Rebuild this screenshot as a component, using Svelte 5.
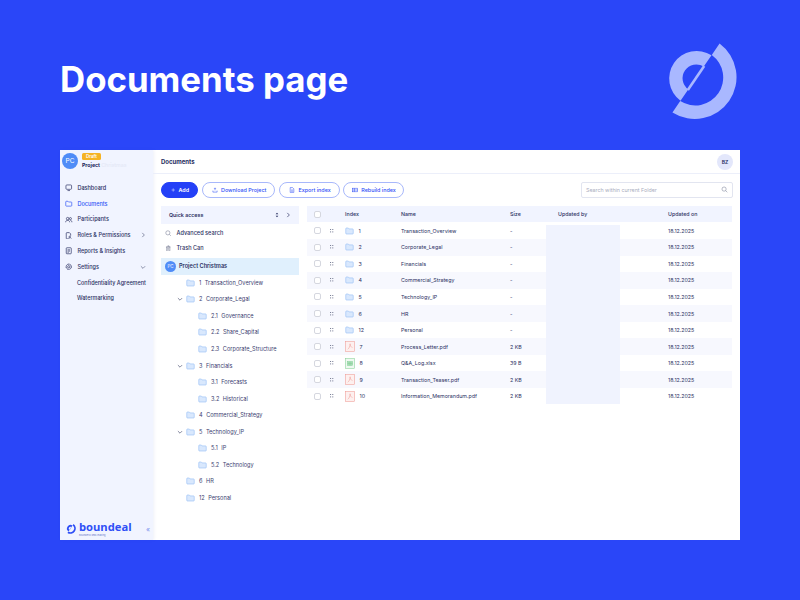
<script>
	const nav = [
		{ label: "Dashboard", icon: "monitor" },
		{ label: "Documents", icon: "folder", active: true },
		{ label: "Participants", icon: "people" },
		{ label: "Roles & Permissions", icon: "doc", chevron: "right" },
		{ label: "Reports & Insights", icon: "report" },
		{ label: "Settings", icon: "gear", chevron: "down" },
		{ label: "Confidentiality Agreement" },
		{ label: "Watermarking" },
	]

	const tree = [
		{ depth: 0, num: "1", name: "Transaction_Overview" },
		{ depth: 0, num: "2", name: "Corporate_Legal", open: true },
		{ depth: 1, num: "2.1", name: "Governance" },
		{ depth: 1, num: "2.2", name: "Share_Capital" },
		{ depth: 1, num: "2.3", name: "Corporate_Structure" },
		{ depth: 0, num: "3", name: "Financials", open: true },
		{ depth: 1, num: "3.1", name: "Forecasts" },
		{ depth: 1, num: "3.2", name: "Historical" },
		{ depth: 0, num: "4", name: "Commercial_Strategy" },
		{ depth: 0, num: "5", name: "Technology_IP", open: true },
		{ depth: 1, num: "5.1", name: "IP" },
		{ depth: 1, num: "5.2", name: "Technology" },
		{ depth: 0, num: "6", name: "HR" },
		{ depth: 0, num: "12", name: "Personal" },
	]

	const rows = [
		{ type: "folder", index: "1", name: "Transaction_Overview", size: "-" },
		{ type: "folder", index: "2", name: "Corporate_Legal", size: "-" },
		{ type: "folder", index: "3", name: "Financials", size: "-" },
		{ type: "folder", index: "4", name: "Commercial_Strategy", size: "-" },
		{ type: "folder", index: "5", name: "Technology_IP", size: "-" },
		{ type: "folder", index: "6", name: "HR", size: "-" },
		{ type: "folder", index: "12", name: "Personal", size: "-" },
		{ type: "pdf", index: "7", name: "Process_Letter.pdf", size: "2 KB" },
		{ type: "xls", index: "8", name: "Q&A_Log.xlsx", size: "39 B" },
		{ type: "pdf", index: "9", name: "Transaction_Teaser.pdf", size: "2 KB" },
		{ type: "pdf", index: "10", name: "Information_Memorandum.pdf", size: "2 KB" },
	]

	// logo: half ring on the upper left, larger half ring on the lower right, cut along one diagonal
	const dx = 0.5635
	const dy = -0.8254
	const pt = (r) => `${(r * dx).toFixed(2)} ${(r * dy).toFixed(2)}`
	const halfRing = (outer, inner, sweep) =>
		`M${pt(outer)}A${outer} ${outer} 0 0 ${sweep} ${pt(-outer)}L${pt(-inner)}A${inner} ${inner} 0 0 ${1 - sweep} ${pt(inner)}Z`
	const logoRing = halfRing(27.5, 13.8, 0)
	const logoArc = halfRing(41.8, 28, 1)
	const logoBar = `M${pt(14.5)}L${pt(-14.5)}`
</script>

{#snippet folder(cls)}
	<svg class={cls} viewBox="0 0 12 10" fill="#d9e8fd" stroke="#93bdf7" stroke-width="0.8">
		<path d="M1 2a1 1 0 0 1 1-1h2.4l1 1.2H10a1 1 0 0 1 1 1V8a1 1 0 0 1-1 1H2a1 1 0 0 1-1-1z" />
	</svg>
{/snippet}

{#snippet logo(cls, fill)}
	<svg class={cls} viewBox="-42 -42 84 84" {fill}>
		<path d={logoRing} />
		<path d={logoArc} />
		<path d={logoBar} stroke={fill} stroke-width="2.6" />
	</svg>
{/snippet}

{#snippet navIcon(name)}
	<svg class="nav-icon" viewBox="0 0 12 12" fill="none" stroke={name === "folder" ? "#2f55f5" : "#2b3163"} stroke-width="1.1">
		{#if name === "monitor"}
			<rect x="1.5" y="1.5" width="9" height="7" rx="1.4" /><path d="M4 10.5h4" />
		{:else if name === "folder"}
			<path d="M1.2 3a1 1 0 0 1 1-1h2.4l1 1.2h4.2a1 1 0 0 1 1 1v4.6a1 1 0 0 1-1 1H2.2a1 1 0 0 1-1-1z" />
		{:else if name === "people"}
			<circle cx="4.2" cy="4.2" r="2" /><circle cx="8.6" cy="4.2" r="1.7" /><path d="M1 10c0-2 1.4-3 3.2-3s3.2 1 3.2 3M8.6 7c1.4 0 2.4 1 2.4 3" />
		{:else if name === "doc"}
			<path d="M7 11H3a1 1 0 0 1-1-1V2a1 1 0 0 1 1-1h4l2 2v3" /><circle cx="7.5" cy="8" r="1.3" /><path d="M8.5 9l1.5 1.5" />
		{:else if name === "report"}
			<rect x="2" y="1.2" width="8" height="9.6" rx="1" /><path d="M4 4.5h4M4 6.5h4M4 8.5h2" />
		{:else if name === "gear"}
			<circle cx="6" cy="6" r="1.8" /><circle cx="6" cy="6" r="4.2" stroke-dasharray="2 0.6" stroke-width="1.5" />
		{/if}
	</svg>
{/snippet}

<div class="page">
	<header class="hero">
		<h1>Documents page</h1>
		{@render logo("hero-logo", "#a9b8ff")}
	</header>

	<section class="app">
		<aside class="sidebar">
			<div class="project">
				<span class="avatar big">PC</span>
				<div class="project-text">
					<span class="draft">Draft</span>
					<span class="project-name">Project <span class="faded">Christmas</span></span>
				</div>
			</div>
			<nav>
				{#each nav as item}
					<div class="nav-item" class:active={item.active} class:sub={!item.icon}>
						{#if item.icon}{@render navIcon(item.icon)}{/if}
						<span>{item.label}</span>
						{#if item.chevron === "right"}
							<svg class="chev" viewBox="0 0 8 8" fill="none" stroke="#5a6080" stroke-width="0.9"><path d="M3 1.2L5.8 4L3 6.8" /></svg>
						{:else if item.chevron === "down"}
							<svg class="chev" viewBox="0 0 8 8" fill="none" stroke="#5a6080" stroke-width="0.9"><path d="M1.2 3L4 5.8L6.8 3" /></svg>
						{/if}
					</div>
				{/each}
			</nav>
			<div class="brand">
				{@render logo("brand-mark", "#2f4ff6")}
				<div class="brand-text">
					<span class="brand-name">boundeal</span>
					<span class="brand-tag">Boundless deal-making</span>
				</div>
				<span class="collapse">«</span>
			</div>
		</aside>

		<main class="content">
			<div class="topbar">
				<h2>Documents</h2>
				<span class="avatar user">BZ</span>
			</div>

			<div class="toolbar">
				<button class="btn primary">
					<svg viewBox="0 0 8 8" fill="none" stroke="#fff" stroke-width="0.8"><path d="M4 1v6M1 4h6" /></svg>
					Add
				</button>
				<button class="btn">
					<svg viewBox="0 0 10 10" fill="none" stroke="#2f4ff6" stroke-width="0.9"><path d="M5 1.5v4M3.5 3L5 1.5 6.5 3M1.5 6v2.5h7V6" /></svg>
					Download Project
				</button>
				<button class="btn">
					<svg viewBox="0 0 10 10" fill="none" stroke="#2f4ff6" stroke-width="0.9"><path d="M2 1h4l2 2v6H2zM3.5 5h3M3.5 7h3" /></svg>
					Export index
				</button>
				<button class="btn rebuild">
					<svg viewBox="0 0 10 10" fill="none" stroke="#2f4ff6" stroke-width="0.9"><rect x="1" y="2" width="8" height="6" /><path d="M1 5h8M4 2v6" /></svg>
					Rebuild index
				</button>
				<div class="search">
					<span>Search within current Folder</span>
					<svg viewBox="0 0 10 10" fill="none" stroke="#80859c" stroke-width="0.8"><circle cx="4.4" cy="4.4" r="3" /><path d="M6.6 6.6L9 9" /></svg>
				</div>
			</div>

			<div class="columns">
				<div class="tree">
					<div class="quick">
						<span>Quick access</span>
						<svg class="updown" viewBox="0 0 6 8" fill="#2b3163"><path d="M3 .6L5 3H1zM3 7.4L1 5h4z" /></svg>
						<svg class="quick-chev" viewBox="0 0 8 8" fill="none" stroke="#2b3163" stroke-width="0.9"><path d="M3 1.2L5.8 4L3 6.8" /></svg>
					</div>
					<div class="tool-row first">
						<svg viewBox="0 0 10 10" fill="none" stroke="#71768f" stroke-width="0.8"><circle cx="4.4" cy="4.4" r="3.2" /><path d="M6.8 6.8L9 9" /></svg>
						Advanced search
					</div>
					<div class="tool-row">
						<svg viewBox="0 0 10 10" fill="none" stroke="#71768f" stroke-width="0.8"><path d="M2.5 3h5v6h-5zM1.5 3h7M4 1.2h2v1.8M4.2 4.5v3M5.8 4.5v3" /></svg>
						Trash Can
					</div>
					<div class="root-row">
						<span class="avatar small">PC</span>
						Project Christmas
					</div>
					{#each tree as node}
						<div class="node" class:child={node.depth === 1}>
							<span class="caret">
								{#if node.open}
									<svg viewBox="0 0 8 8" fill="none" stroke="#4b5072" stroke-width="0.9"><path d="M1.2 2.8L4 5.6L6.8 2.8" /></svg>
								{/if}
							</span>
							{@render folder("tree-folder")}
							<span class="num">{node.num}</span>
							<span>{node.name}</span>
						</div>
					{/each}
				</div>

				<div class="table">
					<div class="row head">
						<span class="check"></span>
						<span class="grip"></span>
						<span class="c-index">Index</span>
						<span class="c-name">Name</span>
						<span class="c-size">Size</span>
						<span class="c-by">Updated by</span>
						<span class="c-on">Updated on</span>
					</div>
					<div class="body">
						{#each rows as row}
							<div class="row">
								<span class="check"></span>
								<span class="grip">
									<svg viewBox="0 0 5 4" fill="#7d8299"><rect width="1.1" height="1" /><rect x="2.2" width="1.1" height="1" /><rect y="2.4" width="1.1" height="1" /><rect x="2.2" y="2.4" width="1.1" height="1" /></svg>
								</span>
								<span class="c-index">
									{#if row.type === "folder"}
										{@render folder("row-folder")}
									{:else if row.type === "pdf"}
										<svg class="file" viewBox="0 0 11 12" fill="#fdf0ef" stroke="#ef9a94" stroke-width="0.6"><rect x="0.5" y="0.5" width="10" height="11" /><path d="M3 9c1.5-1 2.5-3 2.6-6 .2 2.5 1.2 3.8 2.6 4.2" fill="none" /></svg>
									{:else}
										<svg class="file" viewBox="0 0 11 12" fill="#eef9f0" stroke="#86cf97" stroke-width="0.6"><rect x="0.5" y="0.5" width="10" height="11" /><rect x="2.8" y="4" width="5.4" height="4" fill="#a5dcb2" /><path d="M5.5 4v4M2.8 6h5.4" /></svg>
									{/if}
									{row.index}
								</span>
								<span class="c-name">{row.name}</span>
								<span class="c-size">{row.size}</span>
								<span class="c-by"></span>
								<span class="c-on">18.12.2025</span>
							</div>
						{/each}
						<div class="redacted"></div>
					</div>
				</div>
			</div>
		</main>
	</section>
</div>

<style>
	:global(body) {
		margin: 0;
		background: #2a46f8;
		font-family: Inter, "Noto Sans", sans-serif;
	}

	.page {
		width: 800px;
		height: 600px;
		box-sizing: border-box;
		padding: 0 60px;
		overflow: hidden;
	}

	.hero {
		height: 150px;
		display: flex;
		align-items: flex-start;
		justify-content: space-between;
	}

	h1 {
		margin: 59px 0 0;
		color: #fff;
		font-size: 34.8px;
		line-height: 40px;
		font-weight: 700;
	}

	:global(.hero-logo) {
		width: 84px;
		height: 84px;
		margin: 36px 2px 0 0;
	}

	.app {
		height: 390px;
		display: flex;
		background: #fff;
		color: #2b3163;
	}

	.sidebar {
		width: 93px;
		flex: none;
		display: flex;
		flex-direction: column;
		background: #f1f4ff;
		box-shadow: 1px 0 3px rgba(40, 60, 160, 0.08);
	}

	.avatar {
		display: inline-flex;
		align-items: center;
		justify-content: center;
		border-radius: 50%;
		background: #4f8cf7;
		color: #fff;
	}

	.avatar.big {
		width: 16px;
		height: 16px;
		font-size: 6.5px;
	}

	.project {
		display: flex;
		gap: 4px;
		padding: 3px 0 0 2px;
		height: 26px;
	}

	.project-text {
		display: flex;
		flex-direction: column;
		align-items: flex-start;
		gap: 2px;
	}

	.draft {
		background: #f5b324;
		color: #fff;
		font-size: 4.5px;
		line-height: 7px;
		font-weight: 600;
		padding: 0 4px;
		border-radius: 1.5px;
	}

	.project-name {
		font-size: 5.2px;
		line-height: 6px;
		font-weight: 700;
		color: #20265a;
	}

	.faded {
		color: #e4e8f6;
		font-weight: 500;
	}

	nav {
		margin-top: 1px;
		display: flex;
		flex-direction: column;
	}

	.nav-item {
		height: 15.8px;
		display: flex;
		align-items: center;
		gap: 5px;
		padding-left: 5px;
		padding-right: 7px;
		font-size: 5.5px;
		font-weight: 500;
		white-space: nowrap;
	}

	.nav-item.active {
		color: #2f55f5;
	}

	.nav-item.sub {
		padding-left: 17px;
		padding-right: 0;
	}

	.nav-icon {
		width: 7.5px;
		height: 7.5px;
		flex: none;
	}

	.chev {
		width: 6px;
		height: 6px;
		margin-left: auto;
	}

	.brand {
		margin-top: auto;
		height: 24px;
		box-sizing: border-box;
		display: flex;
		align-items: center;
		padding: 2px 3px 0 5px;
		color: #2f4ff6;
	}

	:global(.brand-mark) {
		width: 11px;
		height: 11px;
		flex: none;
		margin-bottom: 2px;
	}

	.brand-text {
		display: flex;
		flex-direction: column;
		margin-left: 3px;
	}

	.brand-name {
		font-family: "Open Sans", sans-serif;
		font-size: 11.2px;
		line-height: 11px;
		font-weight: 700;
	}

	.brand-tag {
		font-size: 2.4px;
		line-height: 3px;
		margin-top: 2px;
		color: #6d7ac9;
	}

	.collapse {
		margin-left: auto;
		font-size: 7px;
		color: #7c93ee;
		margin-top: 1px;
	}

	.content {
		flex: 1;
		min-width: 0;
		padding-left: 8px;
	}

	.topbar {
		height: 23px;
		margin-left: -8px;
		padding: 0 7px 0 8px;
		display: flex;
		align-items: center;
		justify-content: space-between;
		border-bottom: 1px solid #eceffa;
	}

	h2 {
		margin: 0;
		font-size: 6px;
		font-weight: 700;
		color: #262c5e;
	}

	.avatar.user {
		width: 16px;
		height: 16px;
		background: #e3e7fb;
		color: #2b3163;
		font-size: 5px;
		font-weight: 600;
	}

	.toolbar {
		height: 31px;
		display: flex;
		align-items: center;
		gap: 4px;
		padding-right: 7px;
	}

	.btn {
		height: 16px;
		padding: 0 8px 0 9px;
		display: inline-flex;
		align-items: center;
		gap: 3px;
		border-radius: 8px;
		border: 1px solid #a8b8fb;
		background: #fff;
		color: #2f4ff6;
		font: 500 5.4px Inter, sans-serif;
		white-space: nowrap;
	}

	.btn.rebuild {
		padding: 0 7px 0 8px;
		margin-left: -0.5px;
	}

	.btn svg {
		width: 6px;
		height: 6px;
	}

	.btn.primary {
		width: 37px;
		justify-content: center;
		background: #2440f7;
		border-color: #2440f7;
		color: #fff;
		font-weight: 600;
	}

	.search {
		margin-left: auto;
		width: 152px;
		height: 16px;
		box-sizing: border-box;
		padding: 0 4px;
		display: flex;
		align-items: center;
		justify-content: space-between;
		border: 1px solid #e2e5f0;
		border-radius: 2px;
		font-size: 5.3px;
		color: #a9adbe;
	}

	.search svg {
		width: 7px;
		height: 7px;
	}

	.columns {
		display: flex;
	}

	.tree {
		width: 138px;
		flex: none;
		margin-top: 1px;
		font-size: 5.6px;
	}

	.quick {
		height: 18px;
		display: flex;
		align-items: center;
		padding: 0 8px;
		background: #f1f4ff;
		font-weight: 600;
		font-size: 5.3px;
	}

	.updown {
		width: 4px;
		height: 6px;
		margin-left: auto;
	}

	.quick-chev {
		width: 6px;
		height: 6px;
		margin-left: 6px;
	}

	.tool-row {
		height: 15px;
		display: flex;
		align-items: center;
		gap: 5px;
		padding-left: 4px;
		font-weight: 500;
	}

	.tool-row.first {
		margin-top: 1.5px;
	}

	.tool-row svg {
		width: 6.5px;
		height: 6.5px;
	}

	.root-row {
		height: 16.5px;
		margin-top: 2.5px;
		display: flex;
		align-items: center;
		gap: 3px;
		padding-left: 4px;
		background: #e0f0fd;
		font-weight: 600;
	}

	.avatar.small {
		width: 11px;
		height: 11px;
		font-size: 4.4px;
		font-weight: 400;
	}

	.node {
		height: 16.55px;
		display: flex;
		align-items: center;
		padding-left: 16px;
		color: #3b4070;
		white-space: nowrap;
	}

	.node.child {
		padding-left: 28px;
	}

	.caret {
		width: 9px;
		flex: none;
	}

	.caret svg {
		display: block;
		width: 6px;
		height: 6px;
	}

	:global(.tree-folder) {
		width: 9px;
		height: 8px;
		flex: none;
		margin-right: 4px;
	}

	.num {
		margin-right: 3.5px;
	}

	.table {
		flex: 1;
		min-width: 0;
		margin: 1px 8px 0;
		font-size: 5.3px;
	}

	.row {
		display: flex;
		align-items: center;
		color: #2b3163;
	}

	.head {
		height: 16px;
		background: #f1f4ff;
		font-weight: 500;
	}

	.body {
		position: relative;
		margin-top: 0.5px;
	}

	.body .row {
		height: 16.55px;
	}

	.body .row:nth-child(even) {
		background: #f7f8fe;
	}

	.check {
		box-sizing: border-box;
		width: 7px;
		height: 7px;
		margin-left: 6.5px;
		flex: none;
		background: #fff;
		border: 1px solid #d5d7df;
		border-radius: 2px;
	}

	.grip {
		width: 24.5px;
		flex: none;
		padding-left: 9.5px;
		box-sizing: border-box;
		display: flex;
		align-items: center;
	}

	.grip svg {
		width: 5px;
		height: 4px;
	}

	.c-index {
		width: 56px;
		flex: none;
		display: flex;
		align-items: center;
		gap: 4.5px;
	}

	.c-name {
		width: 109px;
		flex: none;
	}

	.c-size {
		width: 48px;
		flex: none;
	}

	.c-by {
		width: 110px;
		flex: none;
	}

	.c-on {
		flex: 1;
	}

	:global(.row-folder) {
		width: 9px;
		height: 8px;
	}

	.file {
		width: 10px;
		height: 11px;
	}

	.redacted {
		position: absolute;
		left: 239px;
		top: 2.5px;
		width: 74px;
		height: 179px;
		background: #f0f3fe;
	}
</style>
